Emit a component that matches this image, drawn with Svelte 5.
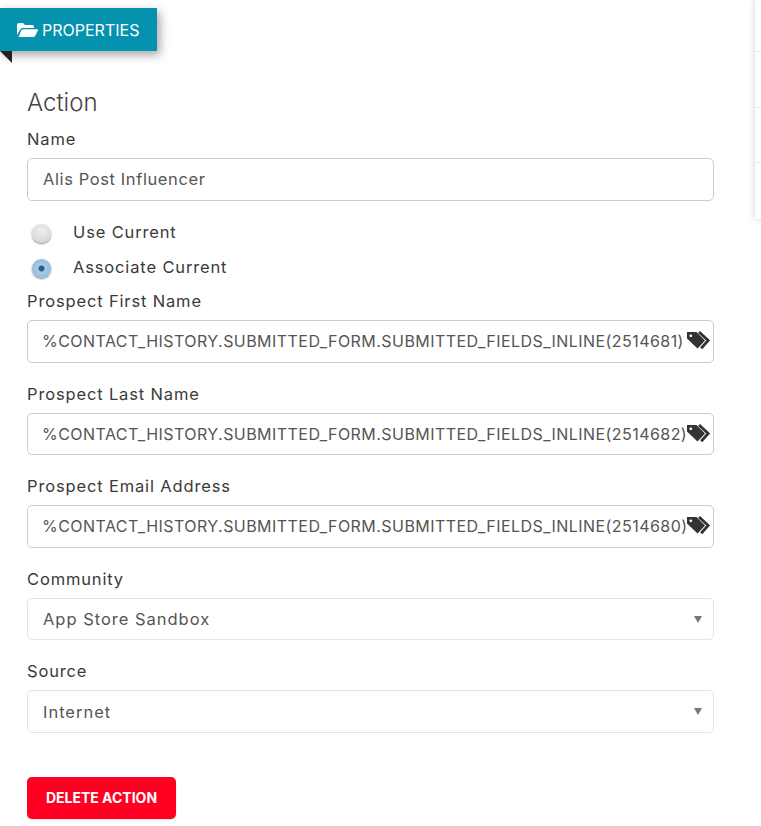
<script>
  const tagged = [
    { label: 'Prospect First Name', value: '%CONTACT_HISTORY.SUBMITTED_FORM.SUBMITTED_FIELDS_INLINE(2514681)' },
    { label: 'Prospect Last Name', value: '%CONTACT_HISTORY.SUBMITTED_FORM.SUBMITTED_FIELDS_INLINE(2514682)' },
    { label: 'Prospect Email Address', value: '%CONTACT_HISTORY.SUBMITTED_FORM.SUBMITTED_FIELDS_INLINE(2514680)' }
  ];
  const selects = [
    { label: 'Community', value: 'App Store Sandbox' },
    { label: 'Source', value: 'Internet' }
  ];
</script>

<div class="page">
  <div class="tab">
    <svg class="folder" width="21" height="14" viewBox="0 0 21 14">
      <path fill="#fff" d="M0 2a2 2 0 0 1 2-2h4l2 2h7a2 2 0 0 1 2 2v1H6a3 3 0 0 0-3 2l-3 5z"/>
      <path fill="#fff" d="M6 6.200h14a1 1 0 0 1 .9 1.400l-2.800 5.400a2 2 0 0 1-1.700 1H1.500l3-7a1.800 1.800 0 0 1 1.500-.8z"/>
    </svg>
    <span>PROPERTIES</span>
  </div>
  <div class="fold"></div>

  <aside class="side">
    <div></div><div></div><div></div><div></div>
  </aside>

  <form class="form">
    <h2>Action</h2>
    <div class="lbl name-label">Name</div>
    <div class="box"><span>Alis Post Influencer</span></div>

    <div class="radios">
      <div class="radio"><i class="dot"></i><span>Use Current</span></div>
      <div class="radio"><i class="dot on"></i><span>Associate Current</span></div>
    </div>

    <div class="groups">
      {#each tagged as f}
        <div class="field">
          <div class="lbl">{f.label}</div>
          <div class="box tagged">
            <span class="val">{f.value}</span>
            <svg class="tags" width="24" height="19" viewBox="0 0 24 19">
              <path fill="#333" d="M1 1h9.500L19 9.500l-7.500 8L1 7.500z"/>
              <circle cx="4.800" cy="4.800" r="1.400" fill="#fff"/>
              <path fill="none" stroke="#333" stroke-width="2.800" d="M13 1l9.200 8.500-7 7.800"/>
            </svg>
          </div>
        </div>
      {/each}

      {#each selects as s}
        <div class="field">
          <div class="lbl">{s.label}</div>
          <div class="box select"><span>{s.value}</span><i class="caret"></i></div>
        </div>
      {/each}
    </div>

    <button type="button" class="del">DELETE ACTION</button>
  </form>
</div>

<style>
  :global(body) { margin: 0; background: #fff; }
  .page {
    position: relative;
    width: 761px;
    height: 826px;
    overflow: hidden;
    font-family: Inter, "Open Sans", sans-serif;
    color: #3a3a3a;
  }
  .tab {
    position: absolute;
    left: 0; top: 8px;
    width: 157px; height: 43px;
    box-sizing: border-box;
    padding-left: 17px;
    display: flex; align-items: center; gap: 4px;
    background: #0492ae;
    color: #fff;
    font-size: 16px;
    box-shadow: 3px 4px 9px rgba(0,0,0,.35);
  }
  .folder { flex: none; }
  .fold {
    position: absolute;
    left: 0; top: 51px;
    width: 0; height: 0;
    border-top: 12px solid #222;
    border-left: 12px solid transparent;
  }
  .side {
    position: absolute;
    left: 755px; top: -1px;
    width: 10px; height: 220px;
    background: #fff;
    box-shadow: 0 0 6px rgba(60,70,80,.28);
    display: flex; flex-direction: column;
  }
  .side div { height: 56px; border-bottom: 1px solid #e6e6e6; box-sizing: border-box; }
  .side div:first-child { height: 53px; }
  .side div:last-child { border: 0; }
  .form {
    box-sizing: border-box;
    width: 714px;
    margin-left: 27px;
    padding-top: 89px;
    display: flex; flex-direction: column;
    align-items: flex-start;
  }
  h2 {
    margin: 0;
    font-size: 24px; line-height: 27px;
    font-weight: 300;
    color: #444;
  }
  .lbl {
    font-size: 16.500px; line-height: 22px;
    letter-spacing: .85px;
    color: #3a3a3a;
  }
  .name-label { margin-top: 12px; }
  .box {
    box-sizing: border-box;
    width: 687px;
    height: 42.500px;
    margin-top: 8px;
    padding: 0 15px;
    display: flex; align-items: center;
    border: 1px solid #ccc;
    border-radius: 5px;
    font-size: 16.500px;
    letter-spacing: .6px;
    color: #555;
    background: #fff;
  }
  .radios { margin-top: 20px; display: flex; flex-direction: column; gap: 13px; }
  .radio { display: flex; align-items: center; height: 22px; padding-left: 5px; font-size: 16.500px; letter-spacing: .85px; }
  .dot {
    flex: none;
    width: 19px; height: 19px;
    margin-right: 22px;
    margin-top: 3px;
    border-radius: 50%;
    background: radial-gradient(circle at 50% 35%, #efefef, #cfcfcf);
    box-shadow: 0 1px 2px rgba(0,0,0,.5);
  }
  .dot.on {
    background: radial-gradient(circle, #2d5f80 0 2.500px, #a7cbe4 3.500px, #86b6d8 100%);
  }
  .groups { margin-top: 12.500px; display: flex; flex-direction: column; gap: 20px; }
  .tagged { position: relative; overflow: hidden; padding-left: 14px; }
  .val { white-space: nowrap; font-size: 16px; letter-spacing: .45px; }
  .tags { position: absolute; left: 658px; top: 10px; }
  .select { position: relative; border-color: #e4e4e4; letter-spacing: .98px; padding-top: 1px; }
  .caret {
    position: absolute; right: 11px; top: 17px;
    width: 0; height: 0;
    border-left: 4px solid transparent;
    border-right: 4px solid transparent;
    border-top: 7px solid #777;
  }
  .del {
    width: 149px; height: 42px;
    margin-top: 44px;
    border: 0; border-radius: 5px;
    background: #ff0022;
    color: #fff;
    font-family: inherit;
    font-size: 14px; font-weight: 700;
    padding: 0;
    box-shadow: 0 1px 2px rgba(0,0,0,.12);
  }
</style>
